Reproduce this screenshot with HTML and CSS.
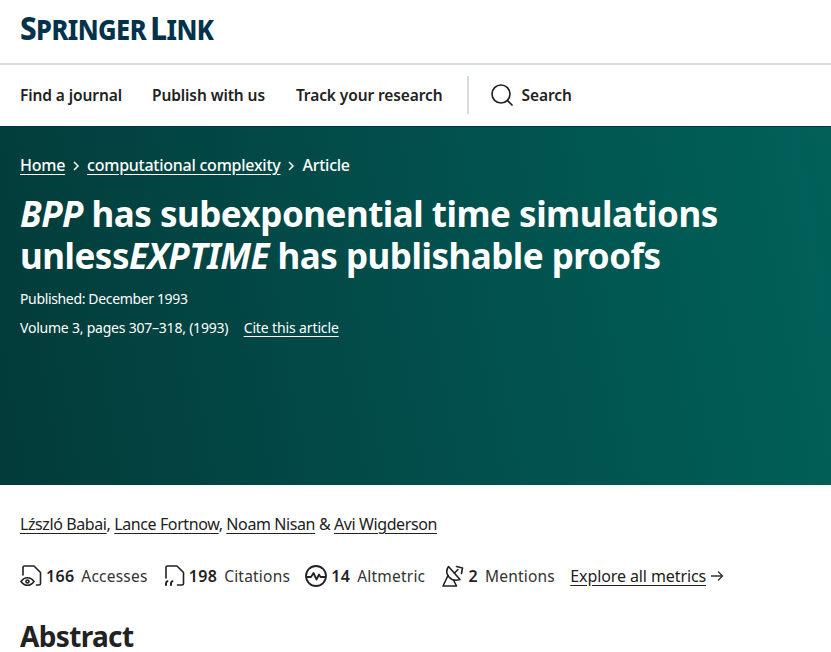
FILE: index.html
```html
<!DOCTYPE html>
<html lang="en">
<head>
    <meta charset="UTF-8">
    <title>BPP has subexponential time simulations unless EXPTIME has publishable proofs</title>
    <link rel="stylesheet" href="styles.css">
</head>
<body>
    <header class="logo-bar">
        <a class="logo" href="#"><span class="logo-big">S</span>PRINGER <span class="logo-big">L</span>INK</a>
    </header>
    <nav class="nav-bar">
        <a class="nav-link" href="#">Find a journal</a>
        <a class="nav-link" href="#">Publish with us</a>
        <a class="nav-link" href="#">Track your research</a>
        <a class="nav-search" href="#">
            <svg width="24" height="24" viewBox="0 0 24 24" fill="none" stroke="#222" stroke-width="1.7" stroke-linecap="round">
                <circle cx="11" cy="11" r="9"></circle>
                <path d="M17.600 17.600l4.400 4.400"></path>
            </svg>
            Search
        </a>
    </nav>
    <section class="hero">
        <ol class="crumbs">
            <li><a href="#">Home</a></li>
            <li class="crumb-sep"><svg width="8" height="10" viewBox="0 0 8 10" fill="none" stroke="#fff" stroke-width="1.5"><path d="M2 1l4 4-4 4"></path></svg></li>
            <li><a href="#">computational complexity</a></li>
            <li class="crumb-sep"><svg width="8" height="10" viewBox="0 0 8 10" fill="none" stroke="#fff" stroke-width="1.5"><path d="M2 1l4 4-4 4"></path></svg></li>
            <li>Article</li>
        </ol>
        <h1 class="title"><i>BPP</i> has subexponential time simulations unless<i>EXPTIME</i> has publishable proofs</h1>
        <p class="pub">Published: December 1993</p>
        <p class="pub pub-vol">Volume 3, pages 307–318, (1993) <a class="cite" href="#">Cite this article</a></p>
    </section>
    <main class="content">
        <p class="authors"><a href="#">Lźszló Babai</a>, <a href="#">Lance Fortnow</a>, <a href="#">Noam Nisan</a> &amp; <a href="#">Avi Wigderson</a></p>
        <ul class="metrics">
            <li class="metric">
                <svg width="22" height="24" viewBox="0 0 22 24" fill="none" stroke="#222" stroke-width="1.600" stroke-linecap="round" stroke-linejoin="round">
                    <path d="M3 11V3.500A1.500 1.500 0 0 1 4.500 2H14l6.500 6.500V19.500A1.500 1.500 0 0 1 19 21H16.500"></path>
                    <path d="M1 17.500c1.800-2.600 4-3.800 6.500-3.800s4.700 1.200 6.500 3.800c-1.800 2.600-4 3.800-6.500 3.800S2.800 20.100 1 17.500z"></path>
                    <circle cx="7.500" cy="17.500" r="1.500"></circle>
                </svg>
                <b>166</b><span>Accesses</span>
            </li>
            <li class="metric">
                <svg width="22" height="24" viewBox="0 0 22 24" fill="none" stroke="#222" stroke-width="1.600" stroke-linecap="round" stroke-linejoin="round">
                    <path d="M3 14V3.500A1.500 1.500 0 0 1 4.500 2H14l6.500 6.500V19.500A1.500 1.500 0 0 1 19 21H14.500"></path>
                    <path d="M3 21v-1.500c0-1 .5-1.800 1.500-2.300M8 21v-1.500c0-1 .5-1.800 1.500-2.300" stroke-width="2"></path>
                </svg>
                <b>198</b><span>Citations</span>
            </li>
            <li class="metric">
                <svg width="22" height="24" viewBox="0 0 22 24" fill="none" stroke="#222" stroke-width="1.800" stroke-linecap="round" stroke-linejoin="round">
                    <circle cx="11" cy="12" r="10"></circle>
                    <path d="M2 13h4l2.500-4 3 6.500 2.500-5 1.500 2.500H20"></path>
                </svg>
                <b>14</b><span>Altmetric</span>
            </li>
            <li class="metric">
                <svg width="24" height="24" viewBox="0 0 24 24" fill="none" stroke="#222" stroke-width="1.600" stroke-linecap="round" stroke-linejoin="round">
                    <path d="M7.500 2.500c-2.500 3.500-2 7.500 .5 10.500s6.500 4 11 2.500z"></path>
                    <path d="M7 11.500L2 22h13.500l-3-6"></path>
                    <path d="M13.500 9L17 5.500"></path>
                    <path d="M15.500 2.500l6 1.500-1 5.500"></path>
                </svg>
                <b>2</b><span>Mentions</span>
            </li>
            <li class="metric-all">
                <a href="#">Explore all metrics</a>
                <svg width="14" height="14" viewBox="0 0 14 14" fill="none" stroke="#333" stroke-width="1.300"><path d="M1 7h11.500M8 2.500L12.500 7 8 11.500"></path></svg>
            </li>
        </ul>
        <h2 class="abstract">Abstract</h2>
    </main>
</body>
</html>
```

FILE: styles.css
```css
* {
    margin: 0;
    padding: 0;
    box-sizing: border-box;
}
body {
    font-family: "Noto Sans", "Open Sans", sans-serif;
    color: #222;
    background: #fff;
    overflow: hidden;
}
a {
    color: inherit;
}

.logo-bar {
    height: 65px;
    padding: 12px 20px 0;
    border-bottom: 2px solid #d5dde3;
}
.logo {
    display: inline-block;
    font-size: 27.500px;
    line-height: 32px;
    font-weight: 800;
    color: #01324b;
    text-decoration: none;
    letter-spacing: -0.6px;
    word-spacing: -2px;
    transform: scaleX(0.924);
    transform-origin: left center;
}
.logo-big {
    font-size: 32px;
}

.nav-bar {
    height: 61px;
    padding: 0 20px 1px;
    display: flex;
    align-items: center;
    gap: 31px;
}
.nav-link {
    font-size: 15.500px;
    font-weight: 600;
    letter-spacing: -0.1px;
    text-decoration: none;
}
.nav-link:first-child {
    margin-right: -1px;
}
.nav-search {
    height: 38px;
    margin-left: -7px;
    padding-left: 21px;
    border-left: 2px solid #d5dde3;
    display: flex;
    align-items: center;
    gap: 8px;
    font-size: 15.500px;
    font-weight: 600;
    letter-spacing: -0.1px;
    text-decoration: none;
}

.hero {
    height: 359px;
    padding: 28px 20px 0;
    color: #fff;
    background: linear-gradient(260deg, #006159 0%, #024e4c 50%, #023b39 100%);
    border-top: 1px solid #01324b;
}
.crumbs {
    list-style: none;
    display: flex;
    align-items: center;
    gap: 7px;
    font-size: 16px;
    font-weight: 500;
    line-height: 20px;
    letter-spacing: -0.25px;
}
.crumbs a {
    text-underline-offset: 3px;
}
.title {
    margin-top: 18px;
    max-width: 730px;
    font-size: 35px;
    line-height: 42px;
    font-weight: 700;
    letter-spacing: -0.5px;
}
.pub {
    margin-top: 12px;
    font-size: 14px;
    line-height: 20px;
    letter-spacing: -0.35px;
}
.pub-vol {
    margin-top: 9px;
    letter-spacing: -0.22px;
}
.cite {
    margin-left: 12px;
    letter-spacing: -0.13px;
    text-underline-offset: 3px;
}

.content {
    padding: 28px 20px 0;
}
.authors {
    font-size: 16px;
    line-height: 22px;
    letter-spacing: -0.4px;
}
.authors a {
    text-underline-offset: 3px;
}
.metrics {
    list-style: none;
    margin-top: 29px;
    display: flex;
    align-items: center;
    gap: 15.300px;
}
.metric {
    display: flex;
    align-items: center;
    gap: 4px;
    font-size: 16px;
}
.metric b {
    font-weight: 600;
    letter-spacing: 0.3px;
}
.metric span {
    margin-left: 3px;
    font-size: 15.500px;
    letter-spacing: 0.2px;
    color: #333;
}
.metric-all {
    display: flex;
    align-items: center;
    gap: 4px;
    font-size: 16px;
    letter-spacing: -0.1px;
}
.metric-all a {
    text-underline-offset: 3px;
}
.abstract {
    margin-top: 33px;
    font-size: 28px;
    line-height: 30px;
    font-weight: 700;
    letter-spacing: -0.65px;
}
```
